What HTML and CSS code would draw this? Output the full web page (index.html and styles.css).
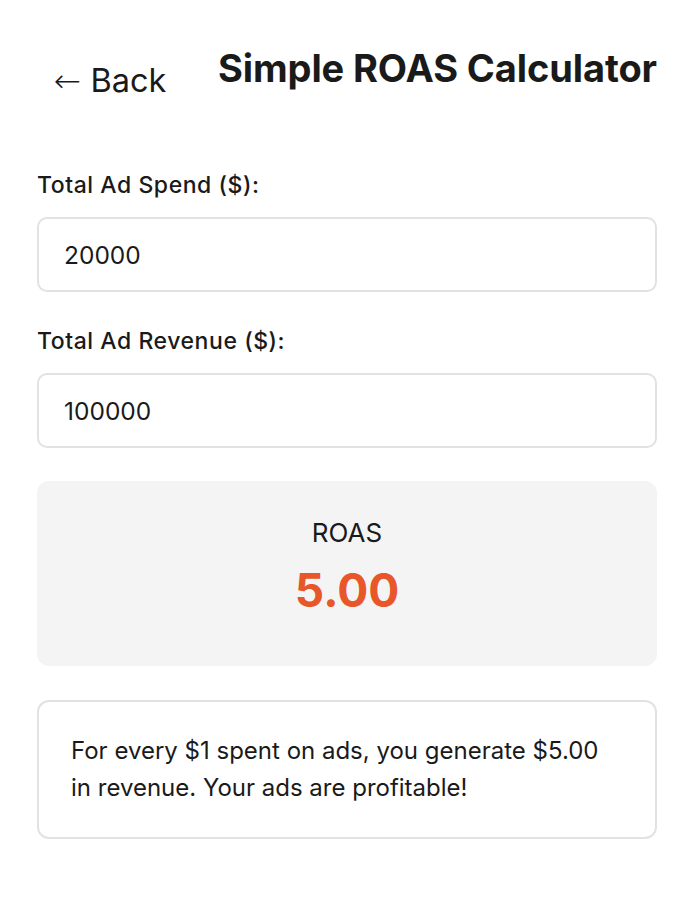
FILE: index.html
```html
<!DOCTYPE html>
<html lang="en">
<head>
<meta charset="utf-8">
<title>Simple ROAS Calculator</title>
<link rel="stylesheet" href="styles.css">
</head>
<body>
<div class="page">
  <header class="header">
    <button class="back" type="button"><span class="back-arrow">←</span> Back</button>
    <h1 class="title">Simple ROAS Calculator</h1>
  </header>

  <div class="field">
    <label class="label" for="spend">Total Ad Spend ($):</label>
    <input class="input" id="spend" type="text" value="20000">
  </div>

  <div class="field">
    <label class="label" for="revenue">Total Ad Revenue ($):</label>
    <input class="input" id="revenue" type="text" value="100000">
  </div>

  <section class="result">
    <div class="result-label">ROAS</div>
    <div class="result-value">5.00</div>
  </section>

  <section class="message">
    <p class="message-text">For every $1 spent on ads, you generate $5.00 in revenue. Your ads are profitable!</p>
  </section>
</div>
</body>
</html>
```

FILE: styles.css
```css
* { box-sizing: border-box; }

body {
  margin: 0;
  background: #ffffff;
  color: #1a1a1a;
  font-family: Inter, "Noto Sans", "Liberation Sans", sans-serif;
}

.page {
  width: 620px;
  margin: 0 auto;
  padding-top: 43px;
}

.header {
  display: flex;
  justify-content: space-between;
  align-items: flex-start;
  margin-bottom: 72px;
}

.back {
  margin-top: 19px;
  padding: 0 0 0 17px;
  border: none;
  background: none;
  font-family: inherit;
  font-size: 32.5px;
  line-height: 38px;
  color: #1a1a1a;
  cursor: pointer;
}

.back-arrow {
  font-family: "DejaVu Sans", sans-serif;
  font-weight: 300;
}

.title {
  margin: 1px 0 0;
  font-size: 38px;
  line-height: 48px;
  font-weight: 700;
  color: #1a1a1a;
  letter-spacing: -0.1px;
}

.field {
  display: flex;
  flex-direction: column;
  margin-bottom: 36px;
}

.label {
  font-size: 23px;
  line-height: 27px;
  font-weight: 500;
  letter-spacing: 0.55px;
  margin-bottom: 18px;
}

.input {
  height: 75px;
  border: 2px solid #e2e2e2;
  border-radius: 10px;
  padding: 0 25px;
  font-family: inherit;
  font-size: 24.5px;
  color: #1a1a1a;
  background: #fff;
  outline: none;
}

.result {
  margin-top: -3px;
  height: 185px;
  background: #f4f4f4;
  border-radius: 12px;
  text-align: center;
  padding-top: 36px;
}

.result-label {
  font-size: 26px;
  line-height: 32px;
  margin-bottom: 13px;
}

.result-value {
  font-size: 46px;
  line-height: 56px;
  font-weight: 700;
  color: #e8572a;
}

.message {
  margin-top: 34px;
  height: 139px;
  border: 2px solid #e2e2e2;
  border-radius: 12px;
  padding: 31px 32px 0;
}

.message-text {
  margin: 0;
  font-size: 24px;
  line-height: 36.6px;
}
```
